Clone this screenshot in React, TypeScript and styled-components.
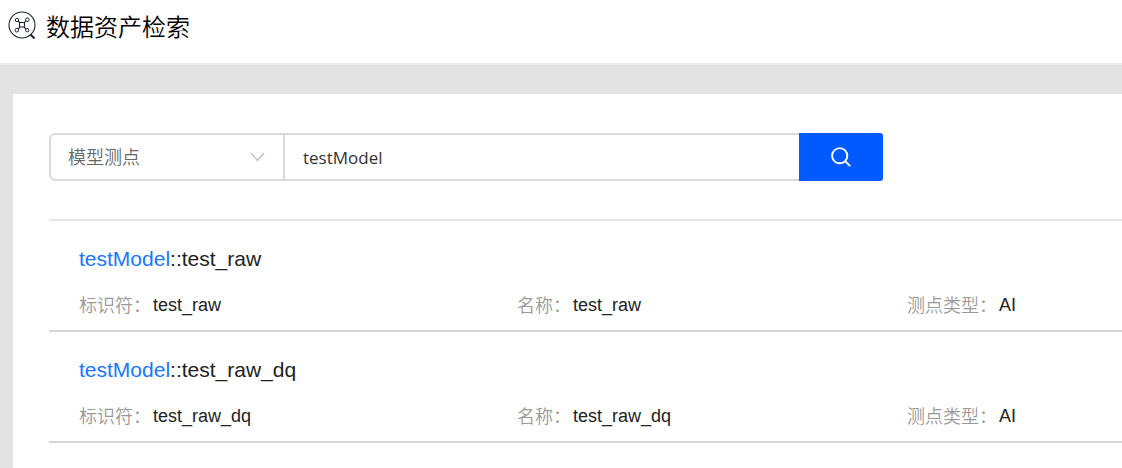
import React, { useState } from 'react';
import styled, { createGlobalStyle } from 'styled-components';

const GlobalStyle = createGlobalStyle`
  * { box-sizing: border-box; }
  html, body, #root { min-height: 100vh; }
  body {
    margin: 0;
    background: #e3e3e3;
    color: #222222;
    font-family: "Liberation Sans", "Noto Sans CJK SC", sans-serif;
    font-size: 18px;
  }
  #root { display: flex; flex-direction: column; }
`;

const Header = styled.header`
  display: flex;
  align-items: center;
  gap: 8px;
  height: 65px;
  padding: 0 8px 12px;
  background: #ffffff;
  border-bottom: 2px solid #ececec;
`;

const Title = styled.h1`
  margin: 0;
  color: #000000;
  font-family: "Noto Sans CJK SC", sans-serif;
  font-size: 24px;
  font-weight: 350;
  line-height: 32px;
`;

const Panel = styled.main`
  flex: 1;
  margin: 29px 0 0 13px;
  padding: 39px 0 24px 36px;
  background: #ffffff;
`;

const SearchForm = styled.form`
  display: flex;
  max-width: 834px;
  height: 48px;
  margin-bottom: 38px;
`;

const SelectWrap = styled.div`
  display: grid;
  flex: 0 0 236px;
  align-items: center;
  margin-right: -2px;

  & > * { grid-area: 1 / 1; }

  & > svg {
    justify-self: end;
    margin-right: 20px;
    pointer-events: none;
  }
`;

const TypeSelect = styled.select`
  appearance: none;
  width: 100%;
  height: 48px;
  padding: 0 40px 2px 17px;
  border: 2px solid #d9d9d9;
  border-radius: 6px 0 0 6px;
  background: #ffffff;
  color: #666666;
  font-family: "Noto Sans CJK SC", sans-serif;
  font-size: 18px;
  font-weight: 350;
  outline: none;
`;

const Keyword = styled.input`
  flex: 1;
  min-width: 0;
  padding: 0 18px;
  border: 2px solid #d9d9d9;
  border-right: 0;
  border-radius: 0;
  background: #ffffff;
  color: #333333;
  font-family: "Open Sans", "Noto Sans CJK SC", sans-serif;
  font-size: 17px;
  outline: none;
`;

const SearchButton = styled.button`
  display: flex;
  flex: 0 0 84px;
  align-items: center;
  justify-content: center;
  padding: 0;
  border: 0;
  border-radius: 0 3px 3px 0;
  background: #005aff;
  color: #ffffff;
  cursor: pointer;
`;

const Results = styled.ul`
  margin: 0;
  padding: 0;
  border-top: 2px solid #e6e6e6;
  list-style: none;
`;

const Result = styled.li`
  padding: 24px 0 10px 30px;
  border-bottom: 2px solid #d6d6d6;
`;

const ResultName = styled.h2`
  margin: 0 0 18px;
  font-size: 21px;
  font-weight: 400;
  line-height: 28px;
`;

const Match = styled.span`
  color: #1677ff;
`;

const Fields = styled.dl`
  display: grid;
  grid-template-columns: 438fr 390fr 215fr;
  margin: 0;
`;

const Field = styled.div`
  display: flex;
  align-items: flex-start;
  gap: 2px;
  white-space: nowrap;
`;

const FieldLabel = styled.dt`
  color: #999999;
  font-family: "Noto Sans CJK SC", sans-serif;
  font-weight: 350;
  line-height: 27px;
`;

const FieldValue = styled.dd`
  margin: 0;
  line-height: 29px;
`;

const GraphSearchIcon = () => (
  <svg width="30" height="30" viewBox="0 0 30 30" fill="none" stroke="#1c2530" aria-hidden="true">
    <circle cx="14" cy="14" r="13" strokeWidth="1.1" />
    <path d="M22.5 23.5 26.5 27.5" strokeWidth="2.2" />
    <rect x="11.5" y="11.5" width="5" height="4.5" rx="1" strokeWidth="1.1" />
    <path d="m10.2 10.2 1.8 1.8M17.7 10.2 16 12M10.2 17.8 12 16M17.8 17.8 16 16" strokeWidth="1.2" />
    <circle cx="9" cy="9" r="1.7" />
    <circle cx="19.3" cy="8.7" r="1.8" />
    <circle cx="8.8" cy="19.2" r="1.8" />
    <circle cx="19.2" cy="19.2" r="1.7" />
  </svg>
);

const ChevronIcon = () => (
  <svg width="15" height="10" viewBox="0 0 15 10" fill="none" stroke="#bfbfbf" strokeWidth="1.4" aria-hidden="true">
    <path d="m1 1 6.5 7.5L14 1" />
  </svg>
);

const MagnifierIcon = () => (
  <svg width="20" height="20" viewBox="0 0 20 20" fill="none" stroke="currentColor" strokeWidth="1.9" aria-hidden="true">
    <circle cx="8.7" cy="8.7" r="7.6" />
    <path d="m14 14 5.2 5.2" />
  </svg>
);

const points = [
  { model: 'testModel', id: 'test_raw', name: 'test_raw', type: 'AI' },
  { model: 'testModel', id: 'test_raw_dq', name: 'test_raw_dq', type: 'AI' },
];

export default function App() {
  const [keyword, setKeyword] = useState('testModel');

  return (
    <>
      <GlobalStyle />
      <Header>
        <GraphSearchIcon />
        <Title>数据资产检索</Title>
      </Header>
      <Panel>
        <SearchForm role="search" onSubmit={(e: React.FormEvent) => e.preventDefault()}>
          <SelectWrap>
            <TypeSelect aria-label="类型" defaultValue="point">
              <option value="point">模型测点</option>
            </TypeSelect>
            <ChevronIcon />
          </SelectWrap>
          <Keyword
            type="text"
            aria-label="关键字"
            value={keyword}
            onChange={(e: React.ChangeEvent<HTMLInputElement>) => setKeyword(e.target.value)}
          />
          <SearchButton type="submit" aria-label="搜索">
            <MagnifierIcon />
          </SearchButton>
        </SearchForm>
        <Results>
          {points.map((point) => (
            <Result key={point.id}>
              <ResultName>
                <Match>{point.model}</Match>::{point.id}
              </ResultName>
              <Fields>
                <Field>
                  <FieldLabel>标识符：</FieldLabel>
                  <FieldValue>{point.id}</FieldValue>
                </Field>
                <Field>
                  <FieldLabel>名称：</FieldLabel>
                  <FieldValue>{point.name}</FieldValue>
                </Field>
                <Field>
                  <FieldLabel>测点类型：</FieldLabel>
                  <FieldValue>{point.type}</FieldValue>
                </Field>
              </Fields>
            </Result>
          ))}
        </Results>
      </Panel>
    </>
  );
}
